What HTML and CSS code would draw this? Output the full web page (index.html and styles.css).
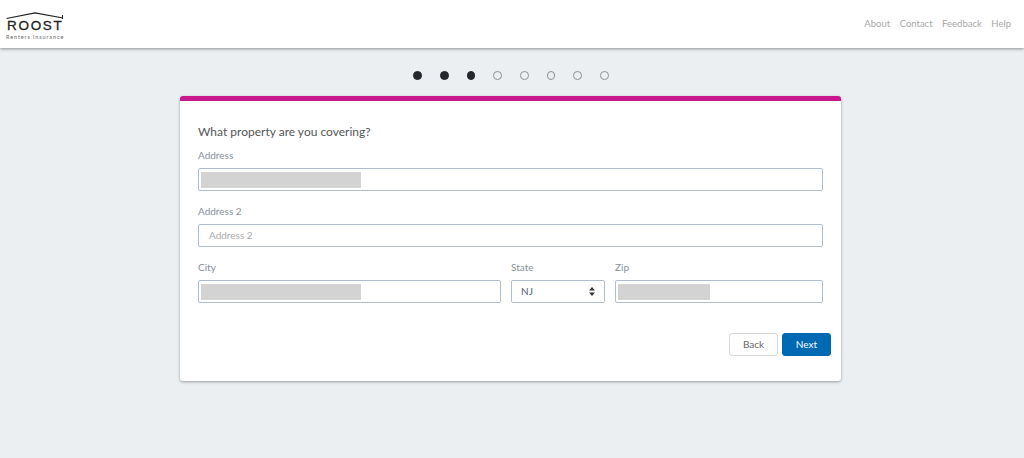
FILE: index.html
```html
<!DOCTYPE html>
<html lang="en">
<head>
<meta charset="utf-8">
<title>Roost Renters Insurance</title>
<link rel="stylesheet" href="styles.css">
</head>
<body>
<header class="topbar">
  <div class="logo">
    <svg class="roof" width="58" height="8" viewBox="0 0 58 8"><path d="M0.5 6.5 L29 0.8 L57 6" fill="none" stroke="#222" stroke-width="1.2"/><path d="M56.5 3v4" stroke="#222" stroke-width="1"/></svg>
    <div class="logo-name">ROOST</div>
    <div class="logo-sub">Renters insurance</div>
  </div>
  <nav class="nav">
    <a>About</a><a>Contact</a><a>Feedback</a><a>Help</a>
  </nav>
</header>
<div class="steps">
  <span class="dot done"></span><span class="dot done"></span><span class="dot done"></span>
  <span class="dot"></span><span class="dot"></span><span class="dot"></span><span class="dot"></span><span class="dot"></span>
</div>
<main class="card">
  <h1 class="title">What property are you covering?</h1>
  <div class="field">
    <label class="label">Address</label>
    <div class="input"><span class="mask mask-wide"></span></div>
  </div>
  <div class="field">
    <label class="label">Address 2</label>
    <div class="input placeholder">Address 2</div>
  </div>
  <div class="row">
    <div class="field city">
      <label class="label">City</label>
      <div class="input"><span class="mask mask-wide"></span></div>
    </div>
    <div class="field state">
      <label class="label">State</label>
      <div class="input select"><span>NJ</span>
        <svg width="6" height="9" viewBox="0 0 6 9"><path d="M3 0 L6 3.4 H0Z M3 9 L0 5.6 H6Z" fill="#333"/></svg>
      </div>
    </div>
    <div class="field zip">
      <label class="label">Zip</label>
      <div class="input"><span class="mask mask-zip"></span></div>
    </div>
  </div>
  <div class="actions">
    <button class="btn btn-back">Back</button>
    <button class="btn btn-next">Next</button>
  </div>
</main>
</body>
</html>
```
FILE: styles.css
```css
* { box-sizing: border-box; }
html, body { height: 100%; }
body {
  margin: 0;
  background: #ebeff2;
  font-family: Lato, "Open Sans", sans-serif;
  color: #555;
  overflow: hidden;
}
.topbar {
  height: 48px;
  background: #fff;
  box-shadow: 0 1px 3px rgba(0,0,0,.4);
  display: flex;
  justify-content: space-between;
  align-items: flex-start;
  padding: 0 13px 0 6px;
}
.logo { width: 60px; padding-top: 12px; line-height: 1; }
.roof { display: block; }
.logo-name {
  font-family: "Liberation Sans", sans-serif;
  font-size: 13.5px;
  font-weight: 400;
  -webkit-text-stroke: .3px #222;
  letter-spacing: 1.7px;
  padding-left: 1px;
  color: #222;
  line-height: 12px;
}
.logo-sub {
  font-size: 5.5px;
  letter-spacing: .9px;
  color: #666;
  line-height: 7px;
  margin-top: 2px;
  white-space: nowrap;
}
.nav { display: flex; gap: 9.5px; padding-top: 17px; font-size: 9.5px; line-height: 14px; color: #a8a8a8; }
.steps {
  display: flex;
  justify-content: center;
  gap: 18px;
  margin-top: 23px;
  padding-right: 2px;
}
.dot {
  width: 8.67px;
  height: 8.67px;
  border-radius: 50%;
  border: 1px solid #8f8f8f;
  background: #ebeff2;
}
.dot.done { background: #25282c; border-color: #25282c; }
.card {
  width: 661px;
  height: 285px;
  margin: 16px 0 0 180px;
  background: #fff;
  border-top: 5px solid #c9178f;
  border-radius: 3px;
  box-shadow: 0 1px 3px rgba(0,0,0,.35);
  padding: 23px 18px 0 18px;
}
.title {
  margin: 0 0 10px;
  font-size: 12px;
  line-height: 15px;
  font-weight: 400;
  color: #555;
}
.field { margin-bottom: 14px; }
.label {
  display: block;
  font-size: 10px;
  line-height: 13px;
  color: #86909a;
  margin-bottom: 6px;
}
.input {
  height: 23px;
  border: 1px solid #b0becb;
  border-radius: 2px;
  background: #fff;
  display: flex;
  align-items: center;
  padding: 2px;
  font-size: 10px;
}
.mask { display: block; height: 16px; margin-top: 1px; background: #d3d3d3; }
.mask-wide { width: 160px; }
.mask-zip { width: 92px; }
.placeholder { padding-left: 10px; color: #aaa; }
.row { display: flex; gap: 10px; }
.city { width: 303px; }
.state { width: 94px; }
.zip { width: 208px; }
.select { justify-content: space-between; padding: 0 9px 0 9px; color: #4f6475; }
.actions { display: flex; justify-content: flex-end; gap: 4px; margin: 16px -8px 0 0; }
.btn {
  width: 49px;
  height: 23px;
  border-radius: 3px;
  font-family: inherit;
  font-size: 10px;
  padding: 0;
}
.btn-back { background: #fff; border: 1px solid #d8d8d8; color: #666; }
.btn-next { background: #0069b4; border: 1px solid #0069b4; color: #fff; }
```
